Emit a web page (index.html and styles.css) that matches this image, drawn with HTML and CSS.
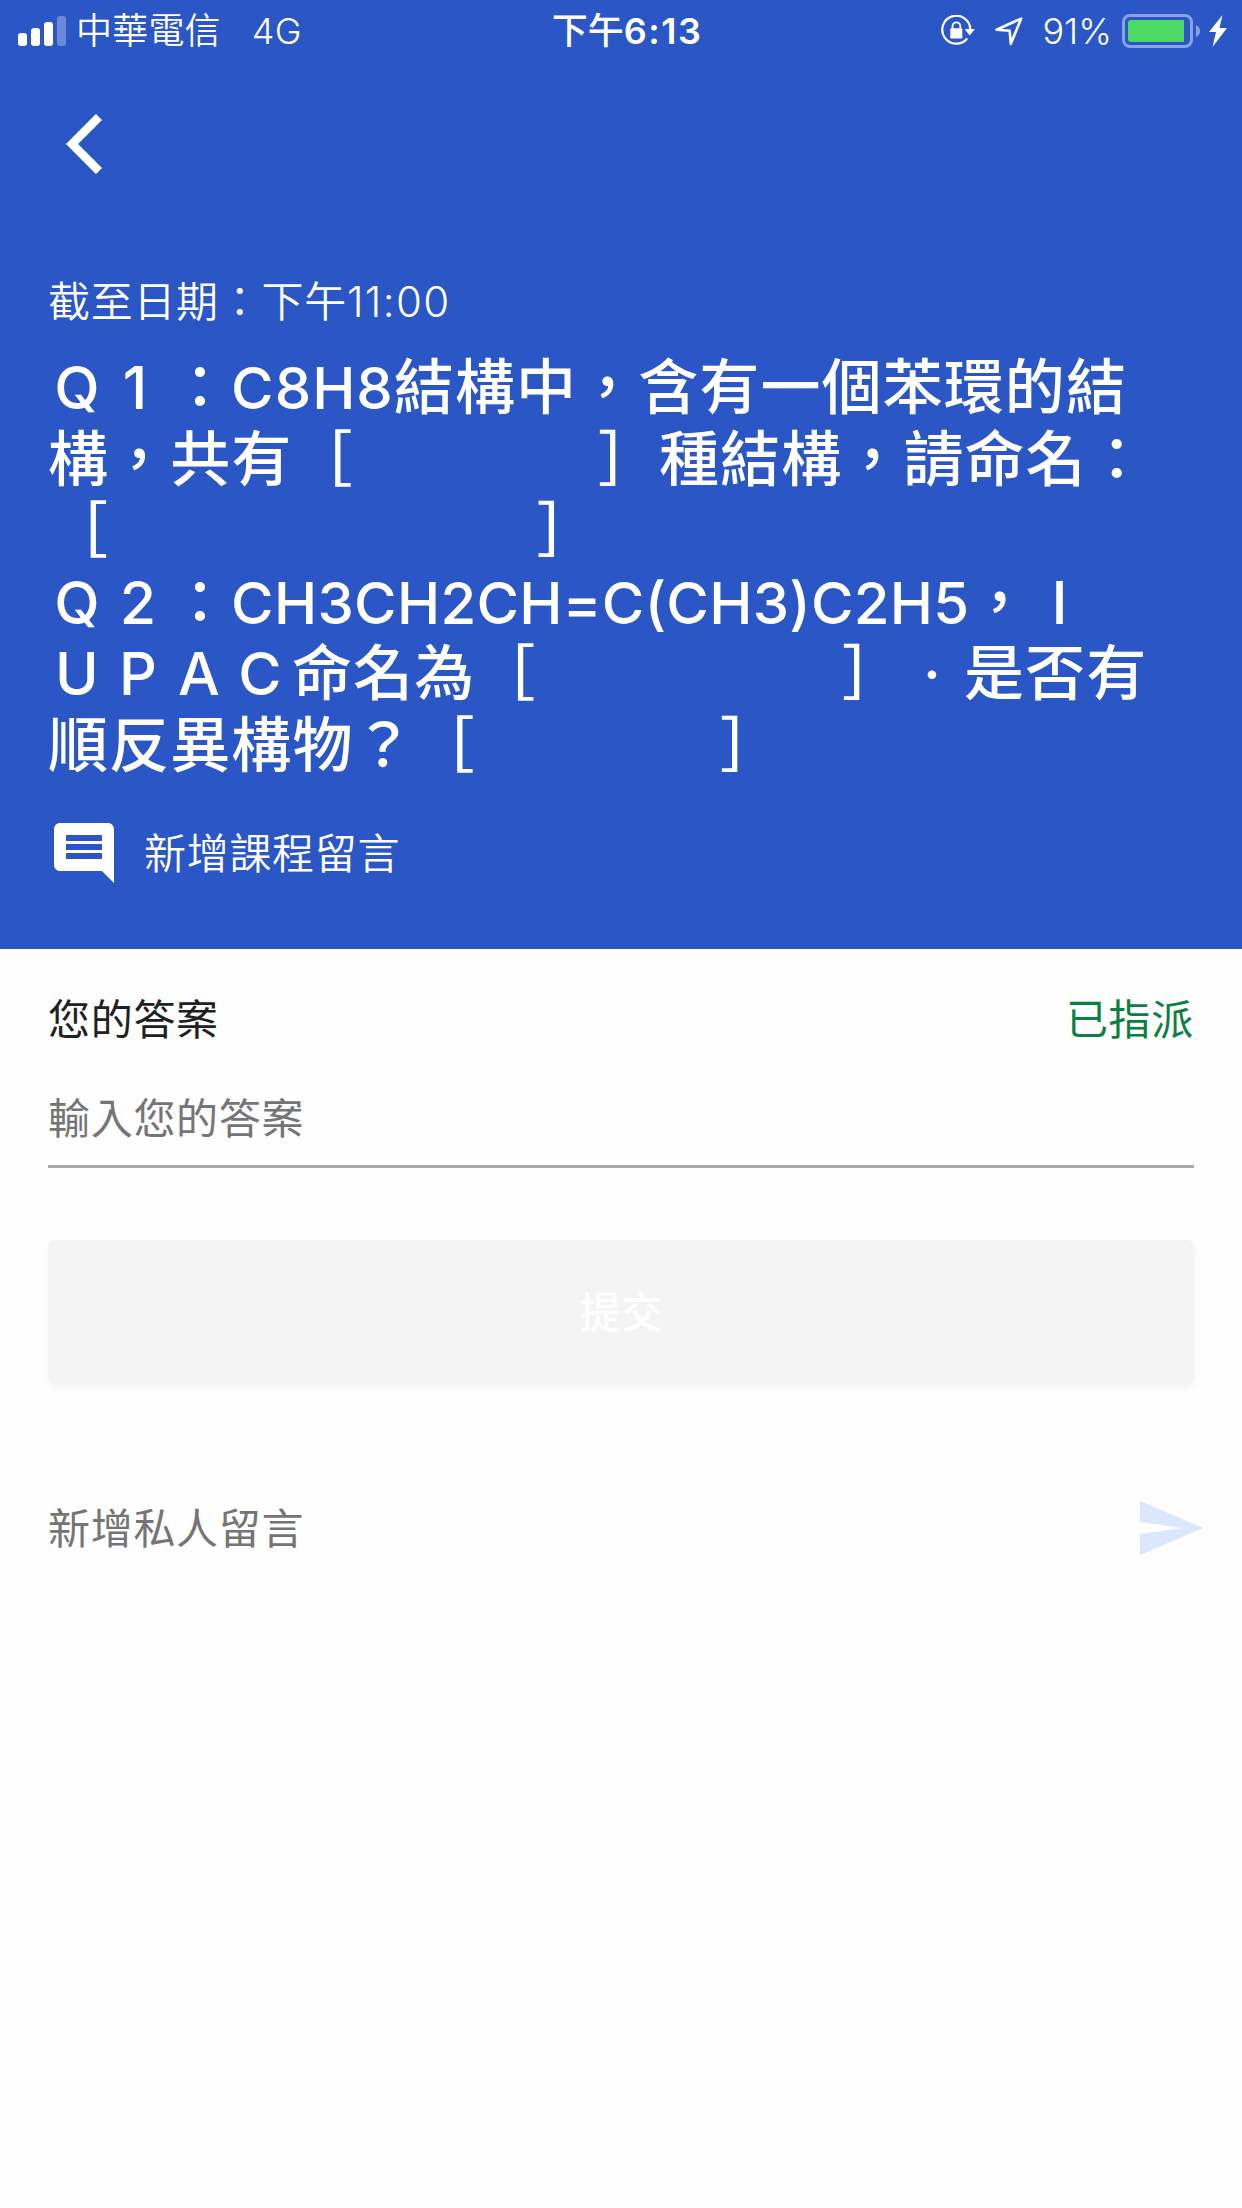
FILE: index.html
```html
<!DOCTYPE html>
<html lang="zh-Hant">
<head>
  <meta charset="UTF-8">
  <meta name="viewport" content="width=device-width, initial-scale=1.0">
  <title>問題</title>
  <link rel="stylesheet" href="styles.css">
</head>
<body>
  <header class="header">
    <div class="status-bar">
      <div class="status-left">
        <svg class="signal" width="48" height="30" viewBox="0 0 48 30" fill="#fff">
          <rect x="0" y="17" width="9" height="13" rx="3"/>
          <rect x="13" y="12" width="9" height="18" rx="3"/>
          <rect x="26" y="6" width="9" height="24" rx="3"/>
          <rect x="39" y="0" width="9" height="30" rx="3" opacity="0.3"/>
        </svg>
        <span class="carrier">中華電信</span>
        <span class="network">4G</span>
      </div>
      <div class="clock">下午<span class="clock-digits">6:13</span></div>
      <div class="status-right">
        <svg class="lock" width="34" height="32" viewBox="0 0 34 32">
          <path d="M26.2 23.5A14 14 0 1 1 29.3 14.5" fill="none" stroke="#fff" stroke-width="2.2"/>
          <path d="M23.5 14H34L28.7 20.4Z" fill="#fff"/>
          <rect x="9.3" y="13.2" width="12" height="10.2" rx="1.2" fill="#fff"/>
          <path d="M11.5 14V11.2a3.9 3.9 0 0 1 7.8 0V14" fill="none" stroke="#fff" stroke-width="1.8"/>
        </svg>
        <svg class="location" width="28" height="29" viewBox="0 0 28 29">
          <path d="M1.5 12.7L26.2 1.6L15.8 26.8L14.7 13.8Z" fill="none" stroke="#fff" stroke-width="2.6" stroke-linejoin="round"/>
        </svg>
        <span class="percent">91%</span>
        <svg class="battery" width="78" height="34" viewBox="0 0 78 34">
          <rect x="1.5" y="1.5" width="68" height="31" rx="6.5" fill="none" stroke="#fff" stroke-opacity="0.45" stroke-width="3"/>
          <path d="M74 11Q78 13 78 17T74 23Z" fill="#fff" fill-opacity="0.45"/>
          <path d="M9 6H62V28H9Q6 28 6 25V9Q6 6 9 6Z" fill="#4cd964"/>
        </svg>
        <svg class="bolt" width="18" height="32" viewBox="0 0 18 32" fill="#fff">
          <path d="M13.5 0L0 17H7L3.5 32L18 13H10.5Z"/>
        </svg>
      </div>
    </div>

    <svg class="back" width="36" height="60" viewBox="0 0 36 60">
      <path d="M33 3L6 30L33 57" fill="none" stroke="#fff" stroke-width="8.6"/>
    </svg>

    <p class="due">截至日期：下午<span class="due-time">11:00</span></p>

    <h1 class="question">
      <span class="line"><span class="wide">Q</span><span class="wide one">1</span>：<span class="latin short">C8H8</span>結構中，含有一個苯環的結</span>
      <span class="line">構，共有［　　　　］種結構，請命名：</span>
      <span class="line">［　　　　　　　］</span>
      <span class="line"><span class="wide">Q</span><span class="wide">2</span>：<span class="latin">CH3CH2CH=C(CH3)C2H5</span>，<span class="wide">I</span></span>
      <span class="line"><span class="wide">U</span><span class="wide">P</span><span class="wide">A</span><span class="wide">C</span>命名為［　　　　　］<span class="wide">‧</span>是否有</span>
      <span class="line">順反異構物？［　　　　］</span>
    </h1>

    <div class="class-comment">
      <svg width="72" height="72" viewBox="0 0 24 24" fill="#fff">
        <path d="M20 2H4c-1.1 0-2 .9-2 2v12c0 1.1.9 2 2 2h14l4 4V4c0-1.1-.9-2-2-2zm-2 12H6v-2h12v2zm0-3H6V9h12v2zm0-3H6V6h12v2z"/>
      </svg>
      <span>新增課程留言</span>
    </div>
  </header>

  <main class="content">
    <div class="answer-head">
      <span class="answer-title">您的答案</span>
      <span class="assigned">已指派</span>
    </div>
    <div class="answer-input">輸入您的答案</div>
    <button class="submit" disabled>提交</button>
    <div class="private-comment">
      <span>新增私人留言</span>
      <svg class="send" width="63" height="54" viewBox="0 0 63 54">
        <path d="M0 0L63 27L0 54V33L44 27L0 21Z" fill="#dae7fd"/>
      </svg>
    </div>
  </main>
</body>
</html>
```
FILE: styles.css
```css
* {
  box-sizing: border-box;
}

body {
  margin: 0;
  background: #fefefe;
  font-family: Inter, "Noto Sans CJK TC", sans-serif;
  font-size: 42px;
  letter-spacing: 0.7px;
}

.header {
  height: 949px;
  background: #2a56c6;
  color: #fff;
}

.status-bar {
  display: grid;
  grid-template-columns: 1fr auto 1fr;
  height: 60px;
  padding: 0 15px 0 18px;
  align-items: center;
  font-size: 36px;
  font-weight: 350;
  line-height: 62px;
  letter-spacing: 0;
}

.status-left,
.status-right {
  display: flex;
  align-items: center;
}

.status-left {
  letter-spacing: 0.2px;
}

.status-right {
  justify-content: flex-end;
}

.carrier {
  margin-left: 10px;
}

.network {
  margin-left: 31px;
}

.clock {
  padding-left: 9px;
  font-weight: 500;
}

.clock-digits {
  font-weight: 600;
  letter-spacing: 1.5px;
}

.location {
  margin-left: 20px;
}

.percent {
  margin-left: 19px;
}

.battery {
  margin-left: 10px;
}

.bolt {
  margin-left: 9px;
}

.back {
  display: block;
  margin: 54px 0 0 66px;
}

.due {
  margin: 98px 0 0 48px;
  line-height: 60px;
  font-weight: 350;
}

.due-time {
  letter-spacing: 1.4px;
}

.question {
  margin: 20px 0 0 48px;
  font-size: 60px;
  font-weight: 500;
  line-height: 71.6px;
  letter-spacing: 1.1px;
}

.line {
  display: block;
  height: 71.6px;
  white-space: pre;
}

.latin {
  font-size: 58px;
  letter-spacing: 0.3px;
}

.short {
  letter-spacing: 1px;
}

/* full-width cell for a single letter */
.wide {
  display: inline-block;
  width: 61px;
  padding-right: 2px;
  font-size: 59px;
  text-align: center;
}

.one {
  padding-right: 8px;
}

.class-comment {
  display: flex;
  align-items: center;
  margin: 35px 0 0 48px;
  font-weight: 350;
}

.class-comment span {
  margin-left: 24px;
  padding-bottom: 4px;
}

.content {
  padding: 41px 48px 0;
}

.answer-head {
  display: flex;
  justify-content: space-between;
  line-height: 60px;
  color: #212121;
}

.assigned {
  color: #0b8043;
}

.answer-input {
  height: 118px;
  padding-top: 39px;
  border-bottom: 3px solid #a9a9a9;
  line-height: 60px;
  color: #757575;
}

.submit {
  display: block;
  width: 100%;
  height: 144px;
  margin-top: 72px;
  padding-bottom: 6px;
  border: none;
  border-radius: 6px;
  background: #f4f4f4;
  box-shadow: 0 4px 8px rgba(0, 0, 0, 0.04);
  color: #fff;
  font: inherit;
  font-weight: 500;
}

.private-comment {
  display: flex;
  justify-content: space-between;
  align-items: center;
  margin: 112px -9px 0 0;
  line-height: 60px;
  color: #757575;
}

.private-comment span {
  padding-top: 3px;
}
```
